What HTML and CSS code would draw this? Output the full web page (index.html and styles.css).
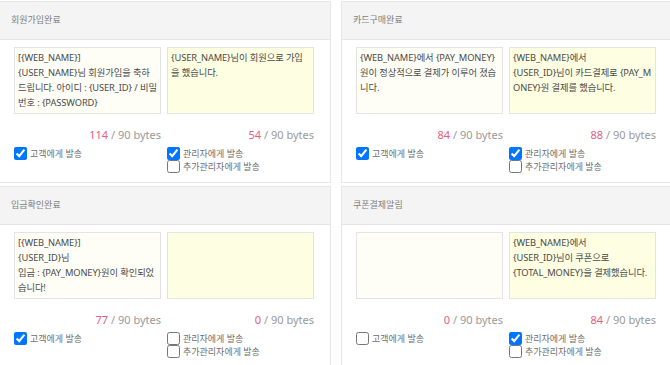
FILE: index.html
```html
<!DOCTYPE html>
<html lang="ko">
<head>
  <meta charset="UTF-8">
  <title>SMS 설정</title>
  <link rel="stylesheet" href="styles.css">
</head>
<body>
<div class="sms-grid">
  <!-- 회원가입완료 -->
  <div class="sms-card">
    <div class="sms-head">회원가입완료</div>
    <div class="sms-body">
      <textarea class="msg msg-user" readonly>[{WEB_NAME}]
{USER_NAME}님 회원가입을 축하
드립니다. 아이디 : {USER_ID} / 비밀
번호 : {PASSWORD}</textarea>
      <textarea class="msg msg-admin" readonly>{USER_NAME}님이 회원으로 가입
을 했습니다.</textarea>
      <div class="bytes"><span class="num">114</span> / 90 bytes</div>
      <div class="bytes"><span class="num">54</span> / 90 bytes</div>
      <div class="checks">
        <label><input type="checkbox" checked> 고객에게 발송</label>
      </div>
      <div class="checks">
        <label><input type="checkbox" checked> 관리자에게 발송</label>
        <label><input type="checkbox"> 추가관리자에게 발송</label>
      </div>
    </div>
  </div>

  <!-- 카드구매완료 -->
  <div class="sms-card">
    <div class="sms-head">카드구매완료</div>
    <div class="sms-body">
      <textarea class="msg msg-user" readonly>{WEB_NAME}에서 {PAY_MONEY}
원이 정상적으로 결제가 이루어 졌습
니다.</textarea>
      <textarea class="msg msg-admin" readonly>{WEB_NAME}에서
{USER_ID}님이 카드결제로 {PAY_M
ONEY}원 결제를 했습니다.</textarea>
      <div class="bytes"><span class="num">84</span> / 90 bytes</div>
      <div class="bytes"><span class="num">88</span> / 90 bytes</div>
      <div class="checks">
        <label><input type="checkbox" checked> 고객에게 발송</label>
      </div>
      <div class="checks">
        <label><input type="checkbox" checked> 관리자에게 발송</label>
        <label><input type="checkbox"> 추가관리자에게 발송</label>
      </div>
    </div>
  </div>

  <!-- 입금확인완료 -->
  <div class="sms-card">
    <div class="sms-head">입금확인완료</div>
    <div class="sms-body">
      <textarea class="msg msg-user" readonly>[{WEB_NAME}]
{USER_ID}님
입금 : {PAY_MONEY}원이 확인되었
습니다!</textarea>
      <textarea class="msg msg-admin" readonly></textarea>
      <div class="bytes"><span class="num">77</span> / 90 bytes</div>
      <div class="bytes"><span class="num">0</span> / 90 bytes</div>
      <div class="checks">
        <label><input type="checkbox" checked> 고객에게 발송</label>
      </div>
      <div class="checks">
        <label><input type="checkbox"> 관리자에게 발송</label>
        <label><input type="checkbox"> 추가관리자에게 발송</label>
      </div>
    </div>
  </div>

  <!-- 쿠폰결제알림 -->
  <div class="sms-card">
    <div class="sms-head">쿠폰결제알림</div>
    <div class="sms-body">
      <textarea class="msg msg-user" readonly></textarea>
      <textarea class="msg msg-admin" readonly>{WEB_NAME}에서
{USER_ID}님이 쿠폰으로
{TOTAL_MONEY}을 결제했습니다.</textarea>
      <div class="bytes"><span class="num">0</span> / 90 bytes</div>
      <div class="bytes"><span class="num">84</span> / 90 bytes</div>
      <div class="checks">
        <label><input type="checkbox"> 고객에게 발송</label>
      </div>
      <div class="checks">
        <label><input type="checkbox" checked> 관리자에게 발송</label>
        <label><input type="checkbox"> 추가관리자에게 발송</label>
      </div>
    </div>
  </div>
</div>
</body>
</html>
```

FILE: styles.css
```css
body {
  margin: 0;
  background: #fff;
  font-family: "Noto Sans", "Noto Sans CJK KR", sans-serif;
  font-size: 11px;
  color: #666;
  overflow: hidden;
}
.sms-grid {
  display: grid;
  grid-template-columns: 330px 330px;
  column-gap: 11px;
  row-gap: 3px;
  padding-top: 1px;
}
.sms-card {
  border: 1px solid #e6e6e6;
  height: 180px;
}
.sms-card:nth-child(odd) {
  margin-left: -1px;
  width: 330px;
}
.sms-head {
  height: 37px;
  line-height: 36px;
  padding-left: 11px;
  background: #f4f4f4;
  border-bottom: 1px solid #e6e6e6;
  color: #808080;
  font-size: 9px;
}
.sms-body {
  display: grid;
  grid-template-columns: 147px 147px;
  column-gap: 6px;
  padding: 7px 15px 0 14px;
}
.msg {
  box-sizing: border-box;
  height: 67px;
  margin: 0;
  padding: 2px 0 2px 3px;
  border: 1px solid #e4e4e4;
  resize: none;
  overflow: hidden;
  font-family: "Noto Sans", "Noto Sans CJK KR", sans-serif;
  font-size: 9.3px;
  letter-spacing: -0.1px;
  line-height: 15px;
  color: #4a4a4a;
  white-space: pre;
  outline: none;
}
.msg-user {
  background: #fffef6;
}
.msg-admin {
  background: #fefee2;
}
.bytes {
  margin-top: 14px;
  text-align: right;
  line-height: 14px;
  color: #999;
}
.bytes .num {
  color: #e2607f;
}
.checks {
  display: flex;
  flex-direction: column;
  margin-top: 5px;
}
.checks label {
  display: flex;
  align-items: center;
  height: 13px;
  color: #6e6e6e;
  font-size: 9px;
  line-height: 13px;
}
.checks input {
  width: 13px;
  height: 13px;
  margin: 0 3px 0 0;
}
```
